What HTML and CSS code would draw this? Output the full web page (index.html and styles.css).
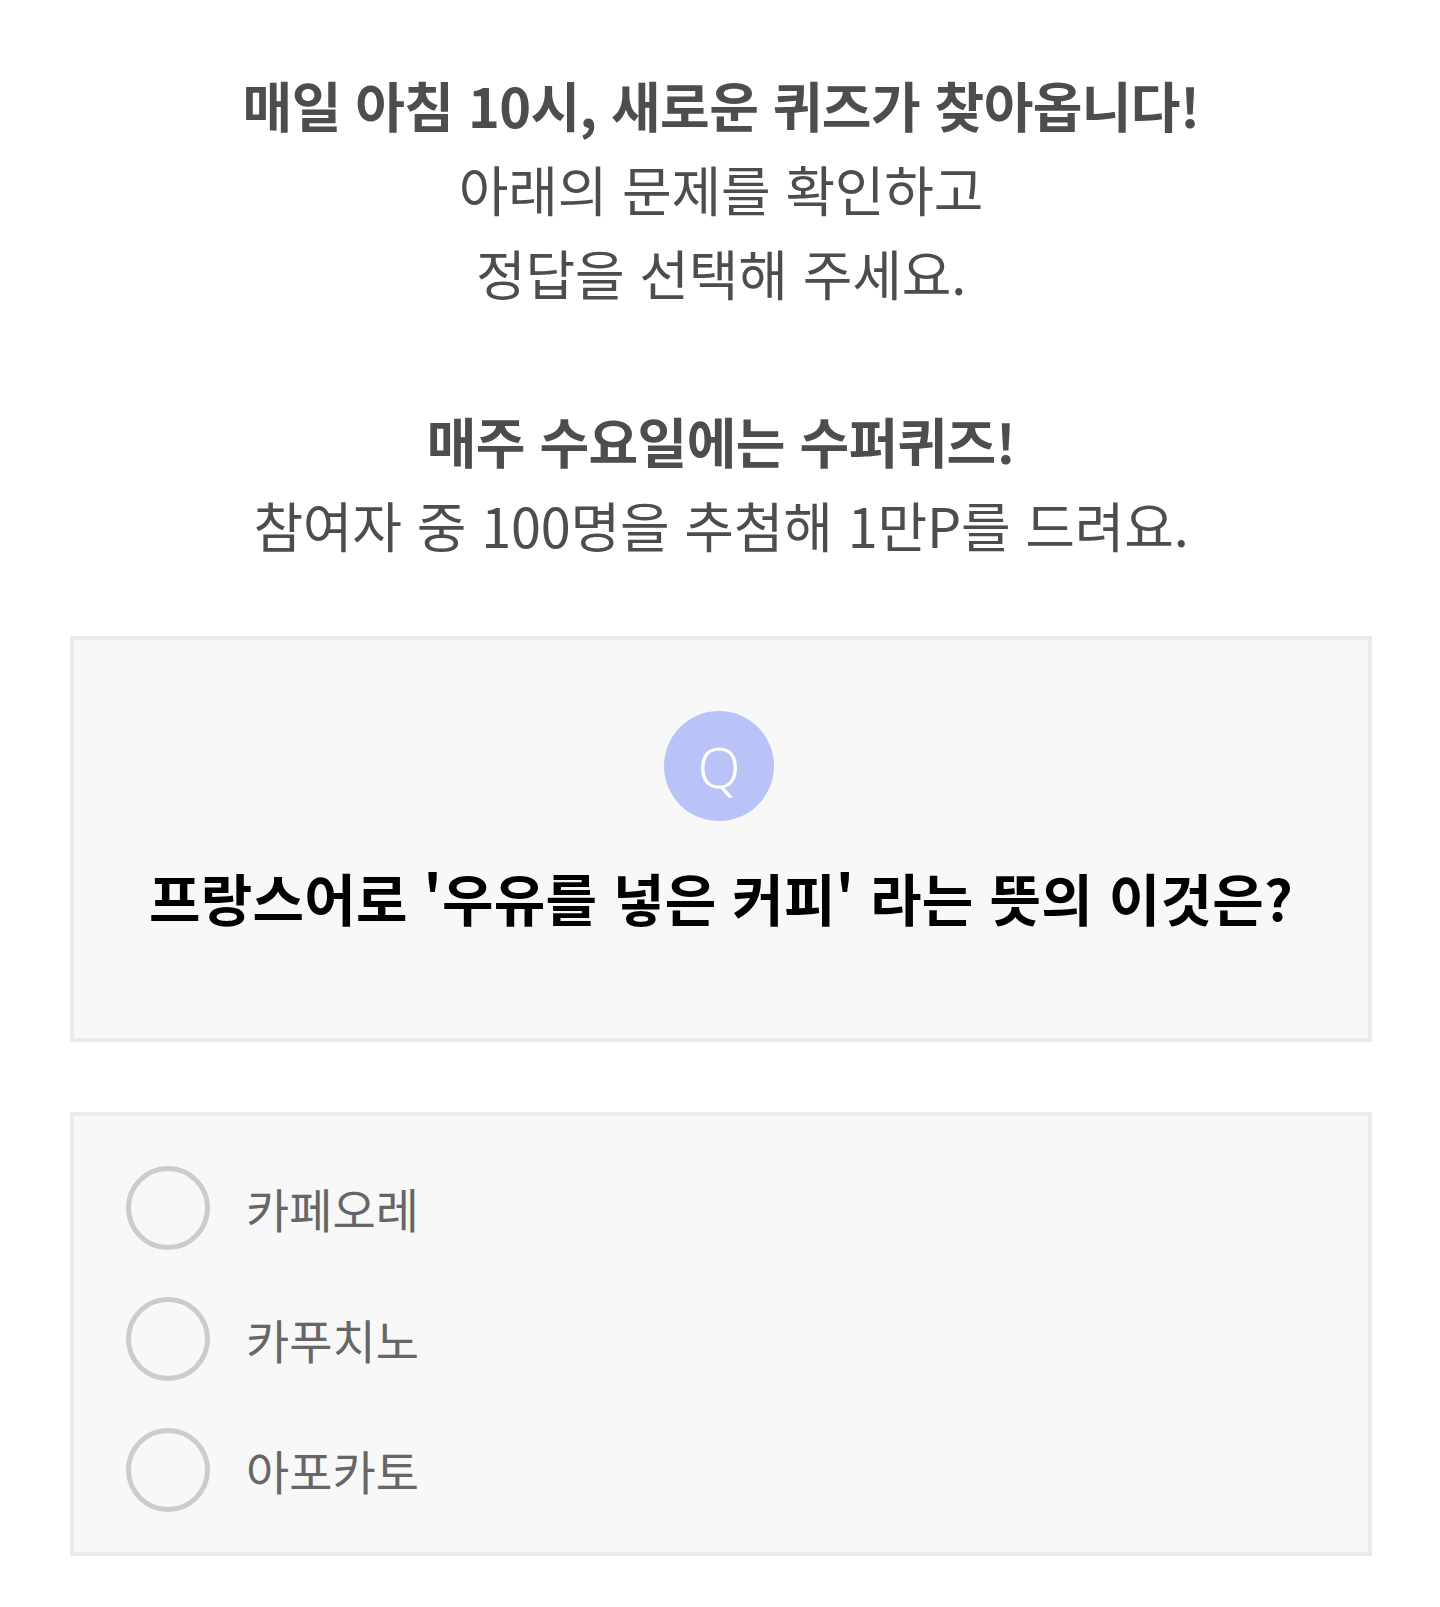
FILE: index.html
```html
<!DOCTYPE html>
<html lang="ko">
<head>
<meta charset="utf-8">
<title>퀴즈</title>
<link rel="stylesheet" href="styles.css">
</head>
<body>
<div class="page">
  <div class="intro">
    <p class="line strong">매일 아침 10시, 새로운 퀴즈가 찾아옵니다!</p>
    <p class="line">아래의 문제를 확인하고</p>
    <p class="line">정답을 선택해 주세요.</p>
    <p class="line blank">&nbsp;</p>
    <p class="line strong">매주 수요일에는 수퍼퀴즈!</p>
    <p class="line">참여자 중 100명을 추첨해 1만P를 드려요.</p>
  </div>

  <section class="card question">
    <div class="q-badge">Q</div>
    <h2 class="q-text">프랑스어로 '우유를 넣은 커피' 라는 뜻의 이것은?</h2>
  </section>

  <section class="card options">
    <label class="option"><span class="radio"></span><span class="opt-text">카페오레</span></label>
    <label class="option"><span class="radio"></span><span class="opt-text">카푸치노</span></label>
    <label class="option"><span class="radio"></span><span class="opt-text">아포카토</span></label>
  </section>
</div>
</body>
</html>
```

FILE: styles.css
```css
* { box-sizing: border-box; }
html, body { margin: 0; padding: 0; background: #ffffff; }
body {
  font-family: "Noto Sans CJK KR", "Noto Sans", sans-serif;
  color: #4c4c4c;
}
.page {
  padding: 63px 68px 51px 70px;
}
.intro {
  text-align: center;
  font-size: 54px;
  line-height: 84px;
  color: #4d4d4d;
}
.intro .line { margin: 0; letter-spacing: -0.2px; }
.intro .strong { font-weight: 700; letter-spacing: -0.6px; }

.card {
  background: #f8f8f8;
  border: 4px solid #ebebeb;
}
.question {
  margin-top: 69px;
  height: 406px;
  padding-top: 71px;
  display: flex;
  flex-direction: column;
  align-items: center;
}
.q-badge {
  width: 110px;
  height: 110px;
  margin-left: -4px;
  border-radius: 50%;
  background: #b9c3f8;
  color: #ffffff;
  font-family: "Noto Sans", sans-serif;
  font-weight: 300;
  font-size: 56px;
  line-height: 110px;
  text-align: center;
}
.q-text {
  margin: 38px 0 0;
  font-size: 56px;
  line-height: 76px;
  font-weight: 700;
  color: #000000;
  letter-spacing: 0.2px;
  text-align: center;
}
.options {
  margin-top: 70px;
  height: 444px;
  padding: 50px 0 0 52px;
  display: flex;
  flex-direction: column;
  gap: 47px;
}
.option {
  display: flex;
  align-items: center;
  gap: 36px;
  height: 84px;
}
.radio {
  width: 84px;
  height: 84px;
  border-radius: 50%;
  border: 5px solid #cccccc;
  flex: none;
}
.opt-text {
  font-size: 47px;
  color: #666666;
  line-height: 60px;
}
```
